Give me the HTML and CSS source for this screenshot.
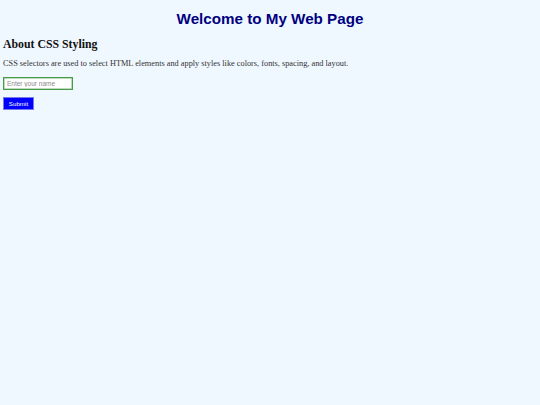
FILE: index.html
```html
<!DOCTYPE html>
<html>
<head>
<meta charset="utf-8">
<link rel="stylesheet" href="styles.css">
</head>
<body>
<h1 class="title">Welcome to My Web Page</h1>
<h2 class="subtitle">About CSS Styling</h2>
<p class="text">CSS selectors are used to select HTML elements and apply styles like colors, fonts, spacing, and layout.</p>
<form class="form">
<input class="name-input" type="text" placeholder="Enter your name">
<button class="submit" type="button">Submit</button>
</form>
</body>
</html>
```
FILE: styles.css
```css
html, body { margin: 0; background: #f0f8ff; }
body { padding: 0 3px; font-family: "Liberation Serif", "Times New Roman", serif; color: #222; }
.title {
  font-family: "Liberation Sans", Arial, sans-serif;
  font-size: 15.2px;
  font-weight: bold;
  color: #000080;
  text-align: center;
  margin: 0;
  padding-top: 9px;
  line-height: 19px;
}
.subtitle {
  font-size: 11.8px;
  font-weight: bold;
  color: #111;
  margin: 8px 0 0;
  line-height: 16px;
}
.text {
  font-size: 8.3px;
  color: #333;
  margin: 6px 0 0;
  line-height: 12px;
}
.form { display: flex; flex-direction: column; align-items: flex-start; gap: 7px; margin-top: 7px; }
.name-input {
  box-sizing: border-box;
  width: 70px;
  height: 13px;
  border: 1px solid #4a9a4a;
  box-shadow: inset 0 0 0 0.5px #7cba7c;
  background: #fff;
  font-family: "Liberation Sans", Arial, sans-serif;
  font-size: 6.5px;
  padding: 0 3px;
  margin: 0;
  outline: none;
}
.name-input::placeholder { color: #8a8a8a; }
.submit {
  box-sizing: border-box;
  width: 31px;
  height: 13px;
  background: #0000ff;
  color: #fff;
  border: 1px solid #7a7af0;
  font-family: "Liberation Sans", Arial, sans-serif;
  font-size: 6.2px;
  padding: 0;
  margin: 0;
}
```
